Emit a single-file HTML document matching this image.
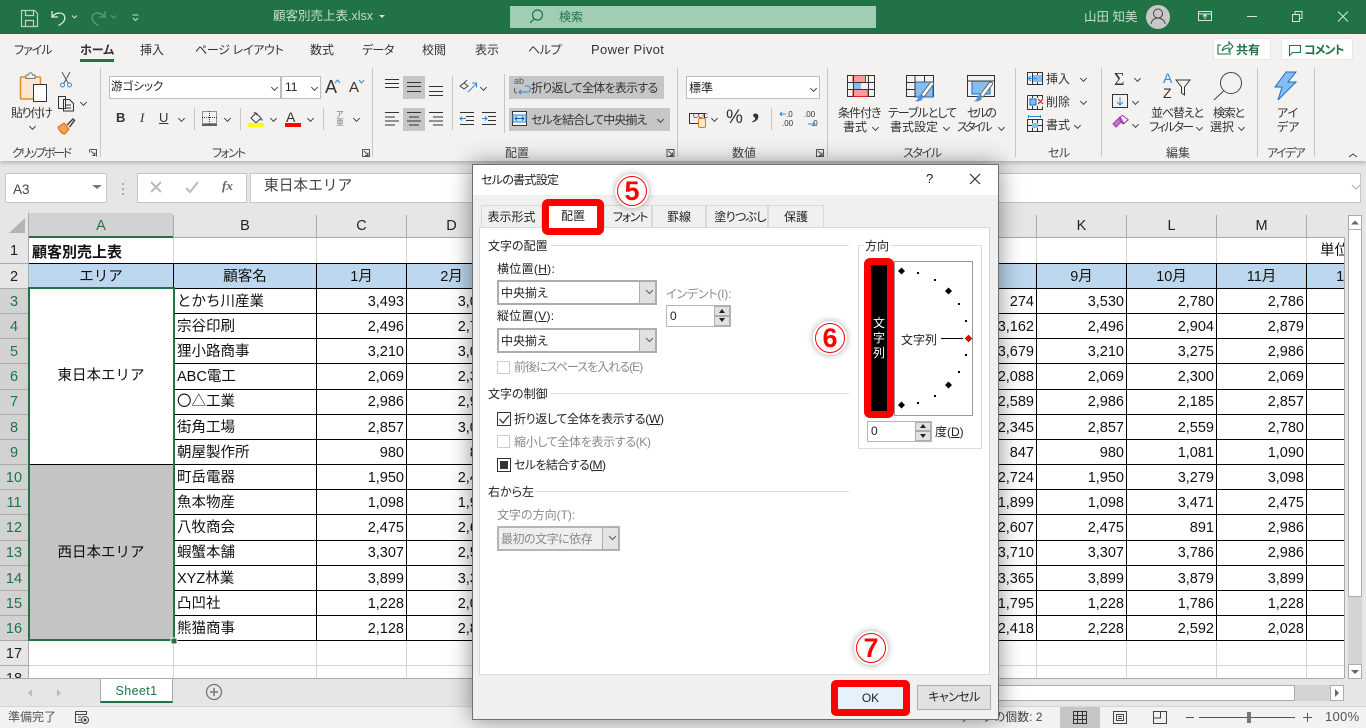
<!DOCTYPE html>
<html lang="ja"><head><meta charset="utf-8"><title>顧客別売上表.xlsx</title>
<style>
html,body{margin:0;padding:0;background:#e6e6e6}
#p{position:relative;width:1366px;height:728px;overflow:hidden;background:#e6e6e6;font:12px/16px "Liberation Sans","Noto Sans CJK JP",sans-serif;color:#333;font-feature-settings:"palt"}
#p div,#p svg{position:absolute}
.t{white-space:nowrap}
.bx{box-sizing:border-box}
.ch{width:4px;height:4px;border-right:1px solid #444;border-bottom:1px solid #444;transform:rotate(45deg)}
#sheet{left:0;top:213px;width:1344px;height:465px;overflow:hidden;background:#fff;font-size:14.5px;color:#111;font-feature-settings:normal}
.r{left:0;width:1344px;height:25px;line-height:25px}
.r span{position:absolute;white-space:nowrap;top:1px}
.r span.n{top:0;line-height:27px}
.n{left:0;width:28px;text-align:center;background:#d2d2d2;color:#217346;height:25px}
.n0{color:#222;background:#e6e6e6}
.b{left:177px}
.c{left:316px;width:88px;text-align:right}
.d{left:406px;width:88px;text-align:right}
.j{left:946px;width:88px;text-align:right}
.k{left:1036px;width:88px;text-align:right}
.l{left:1126px;width:88px;text-align:right}
.m{left:1216px;width:88px;text-align:right}
.hc{text-align:center}
.col{top:0;height:24px;line-height:26px;text-align:center;font-size:14.5px;color:#222}
.lab{color:#222}
.gr{color:#8a8a8a}
.cb{box-sizing:border-box;background:#fff;border:2px solid #adadad}
.db{box-sizing:border-box;background:#e1e1e1;border:1px solid #adadad}
.tab{top:205px;height:22px;box-sizing:border-box;background:#f0f0f0;border:1px solid #d9d9d9;border-bottom:0;text-align:center;line-height:22px;color:#222}
.badge{width:34px;height:34px;box-sizing:border-box;background:#fff;border-radius:50%;border:0;box-shadow:0 0 7px rgba(0,0,0,.35)}
.badge i{position:absolute;left:2px;top:2px;width:30px;height:30px;box-sizing:border-box;border:1px solid #f00;border-radius:50%;font:bold 27px/28px "Liberation Sans",sans-serif;color:#f00;text-align:center}
</style></head><body><div id="p">

<!-- title bar -->
<div style="left:0;top:0;width:1366px;height:34px;background:#217346"></div>
<div style="left:510px;top:6px;width:366px;height:22px;background:#a0cdb4"></div>
<div class="t" style="left:273px;top:8px;font-size:12.5px;color:#c4ddce">顧客別売上表.xlsx</div>
<div class="t" style="left:559px;top:9px;color:#217346">検索</div>
<div class="t" style="left:1084px;top:9px;color:#c4ddce;font-size:12.5px">山田 知美</div>

<!-- ribbon -->
<div style="left:0;top:34px;width:1366px;height:127px;background:#f3f2f1;box-shadow:0 2px 4px rgba(0,0,0,.22)"></div>
<div class="t" style="left:14px;top:42px;letter-spacing:-1px">ファイル</div>
<div class="t" style="left:80px;top:42px;font-weight:bold">ホーム</div>
<div style="left:80px;top:59px;width:34px;height:3px;background:#217346"></div>
<div class="t" style="left:140px;top:42px">挿入</div>
<div class="t" style="left:195px;top:42px;letter-spacing:-.3px">ページ レイアウト</div>
<div class="t" style="left:310px;top:42px">数式</div>
<div class="t" style="left:362px;top:42px;letter-spacing:-.6px">データ</div>
<div class="t" style="left:422px;top:42px">校閲</div>
<div class="t" style="left:475px;top:42px">表示</div>
<div class="t" style="left:528px;top:42px;letter-spacing:-.4px">ヘルプ</div>
<div class="t" style="left:591px;top:42px;font-size:13px;letter-spacing:.35px">Power Pivot</div>

<div class="bx" style="left:1213px;top:38px;width:58px;height:22px;background:#fff;border:1px solid #e6e6e6;border-radius:2px"></div>
<div class="t" style="left:1236px;top:42px;font-weight:bold;color:#217346">共有</div>
<div class="bx" style="left:1281px;top:38px;width:72px;height:22px;background:#fff;border:1px solid #e6e6e6;border-radius:2px"></div>
<div class="t" style="left:1304px;top:42px;font-weight:bold;color:#217346;letter-spacing:-1px">コメント</div>

<!-- ribbon boxes -->
<div class="bx" style="left:109px;top:76px;width:172px;height:23px;background:#fff;border:1px solid #bdbdbd"></div>
<div class="t" style="left:111px;top:79px;font-size:11.5px;color:#222">游ゴシック</div>
<div class="bx" style="left:281px;top:76px;width:40px;height:23px;background:#fff;border:1px solid #bdbdbd"></div>
<div class="t" style="left:285px;top:79px;color:#222">11</div>
<div style="left:403px;top:76px;width:22px;height:23px;background:#c6c6c6"></div>
<div style="left:403px;top:108px;width:22px;height:23px;background:#c6c6c6"></div>
<div style="left:509px;top:76px;width:155px;height:23px;background:#c6c6c6"></div>
<div style="left:509px;top:108px;width:161px;height:23px;background:#c6c6c6"></div>
<div class="t" style="left:531px;top:80px;letter-spacing:-.75px">折り返して全体を表示する</div>
<div class="t" style="left:531px;top:112px;letter-spacing:-.9px">セルを結合して中央揃え</div>
<div class="t" style="left:514px;top:76px;font-size:9px;line-height:10px;color:#555">ab</div>
<div class="bx" style="left:686px;top:76px;width:134px;height:23px;background:#fff;border:1px solid #bdbdbd"></div>
<div class="t" style="left:689px;top:80px;color:#222">標準</div>

<div class="t" style="left:11px;top:105px;letter-spacing:-1.4px">貼り付け</div>
<div class="t" style="left:838px;top:105px;letter-spacing:-1px">条件付き</div>
<div class="t" style="left:843px;top:119px">書式</div>
<div class="t" style="left:888px;top:105px;letter-spacing:-1px">テーブルとして</div>
<div class="t" style="left:890px;top:119px">書式設定</div>
<div class="t" style="left:967px;top:105px;letter-spacing:-2.2px">セルの</div>
<div class="t" style="left:957px;top:119px;letter-spacing:-2.6px">スタイル</div>
<div class="t" style="left:1046px;top:71px">挿入</div>
<div class="t" style="left:1046px;top:94px">削除</div>
<div class="t" style="left:1046px;top:117px">書式</div>
<div class="t" style="left:1151px;top:105px;letter-spacing:-1.2px">並べ替えと</div>
<div class="t" style="left:1149px;top:119px;letter-spacing:-1.9px">フィルター</div>
<div class="t" style="left:1213px;top:105px;letter-spacing:-1.3px">検索と</div>
<div class="t" style="left:1210px;top:119px">選択</div>
<div class="t" style="left:1277px;top:105px">アイ</div>
<div class="t" style="left:1277px;top:119px">デア</div>
<div class="t" style="left:12px;top:145px;color:#444;letter-spacing:-2.3px">クリップボード</div>
<div class="t" style="left:212px;top:145px;color:#444;letter-spacing:-1.7px">フォント</div>
<div class="t" style="left:505px;top:145px;color:#444">配置</div>
<div class="t" style="left:732px;top:145px;color:#444">数値</div>
<div class="t" style="left:903px;top:145px;color:#444;letter-spacing:-1.4px">スタイル</div>
<div class="t" style="left:1048px;top:145px;color:#444;letter-spacing:-.5px">セル</div>
<div class="t" style="left:1166px;top:145px;color:#444">編集</div>
<div class="t" style="left:1267px;top:145px;color:#444;letter-spacing:-1.6px">アイデア</div>
<div class="t" style="left:116px;top:110px;font:bold 13px/16px 'Liberation Sans',sans-serif">B</div>
<div class="t" style="left:140px;top:110px;font:italic 13px/16px 'Liberation Serif',serif">I</div>
<div class="t" style="left:159px;top:110px;font:13px/16px 'Liberation Sans',sans-serif;text-decoration:underline">U</div>
<div class="t" style="left:325px;top:78px;font:18px/18px 'Liberation Sans',sans-serif">A</div>
<div class="t" style="left:349px;top:80px;font:15px/16px 'Liberation Sans',sans-serif">A</div>
<div class="t" style="left:286px;top:109px;font:14px/16px 'Liberation Sans',sans-serif">A</div>
<div class="t" style="left:336px;top:111px;font-size:8px;line-height:8px;color:#777">ア</div>
<div class="t" style="left:336px;top:119px;font-size:8px;line-height:8px;color:#777">亜</div>
<div class="t" style="left:726px;top:108px;font:19px/20px 'Liberation Sans',sans-serif;color:#333">%</div>
<div class="t" style="left:752px;top:94px;font:bold 30px/30px 'Liberation Serif',serif;color:#333">,</div>
<div class="t" style="left:786px;top:111px;font:8px/8px 'Liberation Sans',sans-serif">.0</div>
<div class="t" style="left:782px;top:120px;font:8px/8px 'Liberation Sans',sans-serif">.00</div>
<div class="t" style="left:804px;top:111px;font:8px/8px 'Liberation Sans',sans-serif">.00</div>
<div class="t" style="left:811px;top:120px;font:8px/8px 'Liberation Sans',sans-serif">.0</div>
<div class="t" style="left:1163px;top:71px;font:14px/15px 'Liberation Sans',sans-serif;color:#2b88d8">A</div>
<div class="t" style="left:1163px;top:86px;font:14px/15px 'Liberation Sans',sans-serif;color:#333">Z</div>
<div class="t" style="left:1114px;top:70px;font:18px/18px 'Liberation Serif',serif;color:#333">Σ</div>
<div class="t" style="left:693px;top:113px;font:7px/8px 'Liberation Sans',sans-serif">CCC</div>

<!-- formula bar -->
<div class="bx" style="left:5px;top:173px;width:102px;height:30px;background:#fff;border:1px solid #c6c6c6"></div>
<div class="t" style="left:13px;top:182px;font-size:13.5px;color:#444">A3</div>
<div class="bx" style="left:137px;top:173px;width:110px;height:30px;background:#fff;border:1px solid #c6c6c6"></div>
<div class="t" style="left:222px;top:178px;font:italic bold 13px/16px 'Liberation Serif',serif;color:#666">fx</div>
<div class="bx" style="left:250px;top:173px;width:1111px;height:30px;background:#fff;border:1px solid #c6c6c6"></div>
<div class="t" style="left:264px;top:178px;font-size:14.7px;color:#444;font-feature-settings:normal">東日本エリア</div>

<!-- sheet -->
<div id="sheet">
 <div style="left:0;top:0;width:1344px;height:25px;background:#e6e6e6"></div>
 <div style="left:0;top:25px;width:28px;height:440px;background:#e6e6e6"></div>
 <div style="left:29px;top:0;width:144px;height:24px;background:#d2d2d2"></div>
 <div class="col" style="left:29px;width:144px;color:#217346">A</div>
 <div class="col" style="left:174px;width:142px">B</div>
 <div class="col" style="left:317px;width:89px">C</div>
 <div class="col" style="left:407px;width:89px">D</div>
 <div class="col" style="left:1037px;width:89px">K</div>
 <div class="col" style="left:1127px;width:89px">L</div>
 <div class="col" style="left:1217px;width:89px">M</div>
 <div style="left:29px;top:51px;width:1315px;height:24px;background:#bdd7ee"></div>
 <div style="left:29px;top:252px;width:144px;height:175px;background:#c4c4c4"></div>

 <div class="r" style="top:25px;font-weight:bold"><span class="n n0" style="font-weight:normal">1</span><span style="left:32px;top:2px;font-size:15px">顧客別売上表</span><span style="left:1320px;font-weight:normal">単位</span></div>
 <div class="r" style="top:51px"><span class="n n0" style="height:24px">2</span>
  <span class="hc" style="left:29px;width:144px">エリア</span><span class="hc" style="left:174px;width:142px">顧客名</span><span class="hc" style="left:317px;width:89px">1月</span><span class="hc" style="left:407px;width:89px">2月</span><span class="hc" style="left:1037px;width:89px">9月</span><span class="hc" style="left:1127px;width:89px">10月</span><span class="hc" style="left:1217px;width:89px">11月</span><span class="hc" style="left:1307px;width:89px">12月</span></div>
 <div class="r" style="top:76px"><span class="n">3</span><span class="b">とかち川産業</span><span class="c">3,493</span><span class="d">3,012</span><span class="j">274</span><span class="k">3,530</span><span class="l">2,780</span><span class="m">2,786</span></div>
 <div class="r" style="top:101px"><span class="n">4</span><span class="b">宗谷印刷</span><span class="c">2,496</span><span class="d">2,712</span><span class="j">3,162</span><span class="k">2,496</span><span class="l">2,904</span><span class="m">2,879</span></div>
 <div class="r" style="top:126px"><span class="n">5</span><span class="b">狸小路商事</span><span class="c">3,210</span><span class="d">3,012</span><span class="j">3,679</span><span class="k">3,210</span><span class="l">3,275</span><span class="m">2,986</span></div>
 <div class="r" style="top:151px"><span class="n">6</span><span class="b">ABC電工</span><span class="c">2,069</span><span class="d">2,312</span><span class="j">2,088</span><span class="k">2,069</span><span class="l">2,300</span><span class="m">2,069</span></div>
 <div class="r" style="top:176px"><span class="n">7</span><span class="b">〇△工業</span><span class="c">2,986</span><span class="d">2,912</span><span class="j">2,589</span><span class="k">2,986</span><span class="l">2,185</span><span class="m">2,857</span></div>
 <div class="r" style="top:202px"><span class="n">8</span><span class="b">街角工場</span><span class="c">2,857</span><span class="d">3,012</span><span class="j">2,345</span><span class="k">2,857</span><span class="l">2,559</span><span class="m">2,780</span></div>
 <div class="r" style="top:227px"><span class="n">9</span><span class="b">朝屋製作所</span><span class="c">980</span><span class="d">812</span><span class="j">847</span><span class="k">980</span><span class="l">1,081</span><span class="m">1,090</span></div>
 <div class="r" style="top:252px"><span class="n">10</span><span class="b">町岳電器</span><span class="c">1,950</span><span class="d">2,412</span><span class="j">2,724</span><span class="k">1,950</span><span class="l">3,279</span><span class="m">3,098</span></div>
 <div class="r" style="top:277px"><span class="n">11</span><span class="b">魚本物産</span><span class="c">1,098</span><span class="d">1,912</span><span class="j">1,899</span><span class="k">1,098</span><span class="l">3,471</span><span class="m">2,475</span></div>
 <div class="r" style="top:302px"><span class="n">12</span><span class="b">八牧商会</span><span class="c">2,475</span><span class="d">2,612</span><span class="j">2,607</span><span class="k">2,475</span><span class="l">891</span><span class="m">2,986</span></div>
 <div class="r" style="top:327px"><span class="n">13</span><span class="b">蝦蟹本舗</span><span class="c">3,307</span><span class="d">2,512</span><span class="j">3,710</span><span class="k">3,307</span><span class="l">3,786</span><span class="m">2,986</span></div>
 <div class="r" style="top:353px"><span class="n">14</span><span class="b">XYZ林業</span><span class="c">3,899</span><span class="d">3,312</span><span class="j">3,365</span><span class="k">3,899</span><span class="l">3,879</span><span class="m">3,899</span></div>
 <div class="r" style="top:378px"><span class="n">15</span><span class="b">凸凹社</span><span class="c">1,228</span><span class="d">2,012</span><span class="j">1,795</span><span class="k">1,228</span><span class="l">1,786</span><span class="m">1,228</span></div>
 <div class="r" style="top:403px"><span class="n">16</span><span class="b">熊猫商事</span><span class="c">2,128</span><span class="d">2,812</span><span class="j">2,418</span><span class="k">2,228</span><span class="l">2,592</span><span class="m">2,028</span></div>
 <div class="r" style="top:428px"><span class="n n0">17</span></div>
 <div class="r" style="top:453px"><span class="n n0">18</span></div>
 <div class="t" style="left:29px;top:151px;width:144px;text-align:center;line-height:25px">東日本エリア</div>
 <div class="t" style="left:29px;top:328px;width:144px;text-align:center;line-height:25px">西日本エリア</div>
</div>

<svg width="1366" height="728" viewBox="0 0 1366 728" style="left:0;top:0" shape-rendering="crispEdges" fill="none">
 <!-- grid -->
 <path stroke="#d4d4d4" d="M173.5 238V263M316.5 238V263M406.5 238V263M496.5 238V263M586.5 238V263M946.5 238V263M1036.5 238V263M1126.5 238V263M1216.5 238V263M1306.5 238V263M173.5 641V678M316.5 641V678M406.5 641V678M1036.5 641V678M1126.5 641V678M1216.5 641V678M1306.5 641V678M29 665.5H1344"/>
 <path stroke="#aaa" d="M28.5 213V678M29 237.5H1344M173.5 215V237M316.5 215V237M406.5 215V237M496.5 215V237M1036.5 215V237M1126.5 215V237M1216.5 215V237M1306.5 215V237M0 263.5H28M0 288.5H28M0 313.5H28M0 338.5H28M0 363.5H28M0 389.5H28M0 414.5H28M0 439.5H28M0 464.5H28M0 489.5H28M0 514.5H28M0 540.5H28M0 565.5H28M0 590.5H28M0 615.5H28M0 640.5H28M0 665.5H28M1344.5 237V678"/>
 <path stroke="#000" d="M29 263.5H1344M29 288.5H1344M174 313.5H1344M174 338.5H1344M174 363.5H1344M174 389.5H1344M174 414.5H1344M174 439.5H1344M29 464.5H1344M174 489.5H1344M174 514.5H1344M174 540.5H1344M174 565.5H1344M174 590.5H1344M174 615.5H1344M174 640.5H1344M173.5 263V640M316.5 263V640M406.5 263V640M496.5 263V640M946.5 263V640M1036.5 263V640M1126.5 263V640M1216.5 263V640M1306.5 263V640"/>
 <path stroke="#217346" stroke-width="2" d="M29 288H174V640H29Z"/>
 <path stroke="#217346" stroke-width="2" d="M29 237H173"/>
 <rect x="171" y="638" width="6" height="6" fill="#217346" stroke="#fff"/>
 <path fill="#b4b4b4" d="M25 218V233H9Z" shape-rendering="auto"/>

 <!-- separators -->
 <path stroke="#c6c6c6" d="M100.5 68V157M372.5 68V157M677.5 68V157M827.5 68V157M1015.5 68V157M1101.5 68V157M1257.5 68V157M1314.5 68V157M504.5 74V133M452.5 76V130M194.5 108V130M240.5 108V130M323.5 108V130M771.5 108V130"/>
 <path stroke="#e0e0e0" d="M125.5 176V200"/>
</svg>

<svg width="1366" height="728" viewBox="0 0 1366 728" style="left:0;top:0" fill="none">
 <!-- title icons -->
 <path stroke="#b7d4c4" stroke-width="1.2" d="M21.5 10.5h13l3 3v13h-16zM25.5 10.5v5h8v-5M25.5 26.5v-6h8v6"/>
 <path stroke="#dfeae4" stroke-width="1.3" d="M52 11v6h6M52.5 16.5c3-4 10-5 12-.5 1.500 4-2 7.500-6 9.500"/>
 <path stroke="#5f9c7c" stroke-width="1.300" d="M105 11v6h-6M104.500 16.500c-3-4-10-5-12-.5-1.500 4 2 7.500 6 9.500"/>
 <path stroke="#cfe2d7" d="M72 15.500l2.500 2.500 2.500-2.500"/>
 <path stroke="#5f9c7c" d="M111 15.500l2.500 2.500 2.500-2.500"/>
 <path stroke="#cfe2d7" d="M132.500 15h6M133 18l2.500 2.500 2.500-2.500"/>
 <path fill="#cfe2d7" d="M379 15h6l-3 3z"/>
 <circle cx="537.500" cy="15" r="5" stroke="#217346" stroke-width="1.200"/><path stroke="#217346" stroke-width="1.200" d="M534 19l-4 4"/>
 <circle cx="1158" cy="17" r="12" fill="#c8c8c8"/><circle cx="1158" cy="13.500" r="4.500" stroke="#444"/><path stroke="#444" d="M1151 24c1-8 13-8 14 0"/>
 <path stroke="#d6e6dd" d="M1198.500 11.500h13v9h-13zM1198.500 14h13M1205 19v-4M1203 16.500l2-2 2 2"/>
 <path stroke="#d6e6dd" d="M1247 16.500h10"/>
 <path stroke="#d6e6dd" d="M1292.500 14.500h7v7h-7zM1295 14v-2.500h7v7h-2.500"/>
 <path stroke="#d6e6dd" d="M1338 11.500l10 10M1348 11.500l-10 10"/>

 <!-- share / comment -->
 <path stroke="#217346" stroke-width="1.100" d="M1221 45h-3v9h12v-3M1222 51c1-4 3-6 7-6v-3l4 4.500-4 4.500v-3c-3 0-5 1-7 3"/>
 <path stroke="#217346" stroke-width="1.100" d="M1289.500 45.500h11v7h-8l-3 3z"/>

 <!-- clipboard -->
 <rect x="20.500" y="77" width="20" height="22" rx="1" fill="#fbe7d0" stroke="#e8862a" stroke-width="1.500"/>
 <path stroke="#777" fill="#f3f2f1" d="M26 77v-2h2.500c0-3 4-3 4 0h2.500v3.500h-9z"/>
 <rect x="33.500" y="84.500" width="13" height="17" fill="#fff" stroke="#333"/>
 <path stroke="#555" d="M62 72l6 11M70 72l-6 11"/><circle cx="62.500" cy="85" r="2" stroke="#2b88d8"/><circle cx="69.500" cy="85" r="2" stroke="#2b88d8"/>
 <path stroke="#333" fill="#f3f2f1" d="M58.500 96.500h7v12h-7zM63.500 99.500h6l4 4v7.500h-10z"/><path stroke="#333" d="M66 105h5M66 108h5"/>
 <path fill="#f2a250" stroke="#d86a10" d="M58 127l6-4 5 6-4 5c-3 0-6-3-7-7z"/><path stroke="#444" stroke-width="1.500" d="M67 125l6-6 1.500 1.500-5 6.500"/>

 <!-- font -->
 <path stroke="#2b88d8" d="M335 83l2.500-3 2.500 3"/><path stroke="#2b88d8" d="M359 80l2.500 3 2.500-3"/>
 <path stroke="#333" stroke-dasharray="1 1" d="M202.500 111.500h14v12h-14zM209.500 111v13M202 117.500h15"/><path stroke="#111" stroke-width="1.300" d="M202 125h15"/>
 <path stroke="#444" d="M251 118l5-5 5 5-5 5zM254 112l3 3"/><path fill="#1e6fc0" d="M260 117c1 1 3 2 2.500 3.500h-2z"/>
 <rect x="248" y="123" width="16" height="4" fill="#ff0"/>
 <rect x="285" y="123" width="16" height="4" fill="#f00"/>

 <!-- align -->
 <g stroke="#333"><path d="M385 79.500h14M385 83.500h14M385 87.500h14"/><path d="M407 82.500h14M407 86.500h14M407 91.500h14"/><path d="M429 86.500h14M429 91.500h14M429 95.500h14"/>
 <path d="M385 112.500h14M385 117h10M385 121h14M385 125h10"/><path d="M407 112.500h14M409 117h10M407 121h14M409 125h10"/><path d="M429 112.500h14M433 117h10M429 121h14M433 125h10"/>
 <path d="M460 112.500h14M466 116.500h8M466 120.500h8M460 124.500h14"/><path d="M482 112.500h14M488 116.500h8M488 120.500h8M482 124.500h14"/></g>
 <path stroke="#2b88d8" d="M460 118.500h6M462 116.500l-2 2 2 2M482 118.500h5M485 116.500l2 2-2 2"/>
 <path stroke="#444" d="M460 86l4-3 4 3-4 3zM467 80l-4 4"/><path stroke="#2b88d8" d="M468 92l8-8M472 83h4.500v4.500"/>
 <path stroke="#2b88d8" d="M519 92h9c3 0 3-6 0-6h-3M521 90l-2 2 2 2"/>
 <path stroke="#555" d="M515 88c-1 2-1 5 2 5"/>
 <rect x="512.500" y="111.500" width="14" height="14" fill="#fff" stroke="#333"/><path stroke="#2b88d8" fill="#cde3f6" d="M513 115h13v7h-13z"/><path stroke="#1565b0" d="M515 118.500h9M517 116.500l-2 2 2 2M522 116.500l2 2-2 2"/>

 <!-- number -->
 <rect x="689.500" y="113.500" width="15" height="10" stroke="#333"/>
 <rect x="698.500" y="118.500" width="7" height="9" rx="1.500" fill="#fbe7d0" stroke="#e07b1a"/>
 <path stroke="#2b88d8" d="M780 114h6M782 112l-2 2 2 2M808 124h7M813 122l2 2-2 2"/>

 <!-- styles -->
 <g stroke="#333" stroke-width="1"><rect x="847.500" y="75.500" width="27" height="21"/></g>
 <rect x="853" y="75.500" width="12.500" height="7" fill="#ff9a9a" stroke="#d22"/><rect x="853" y="82.500" width="8" height="7" fill="#86bdf0"/><rect x="853" y="89.500" width="15" height="7" fill="#ff9a9a" stroke="#d22"/>
 <path stroke="#333" d="M847 82.500h28M847 89.500h28M853.500 75v22M868.500 75v22"/>
 <rect x="906.500" y="75.500" width="27" height="21" stroke="#333"/><rect x="915" y="82" width="18" height="15" fill="#86bdf0" stroke="#1570c0"/><path stroke="#333" d="M906 82.500h9M906 89.500h9M915 75v22M924.500 75v7"/>
 <path fill="#fff" stroke="#666" d="M921 95l9-12c2-2 5 0 3 2l-9 12z"/><path fill="#4d94d0" d="M914 101c3 0 4-2 4.500-5 1.500-2 5 1 4 3-1 2-5 3-8.500 2z"/>
 <rect x="967.500" y="75.500" width="27" height="21" stroke="#333"/><rect x="972" y="81" width="18" height="13" fill="#86bdf0" stroke="#1570c0"/><path stroke="#333" d="M967 81h28"/>
 <path fill="#fff" stroke="#666" d="M980 95l9-12c2-2 5 0 3 2l-9 12z"/><path fill="#4d94d0" d="M973 101c3 0 4-2 4.500-5 1.500-2 5 1 4 3-1 2-5 3-8.500 2z"/>

 <!-- cells -->
 <path stroke="#333" d="M1027.500 72.500h15v12h-15zM1027.500 78.500h15M1032.500 72v13M1037.500 72v13"/><rect x="1033" y="75" width="9" height="7" fill="#86bdf0"/><path stroke="#2b88d8" d="M1028 78.500h9M1031 76l-3 2.500 3 2.500"/>
 <path stroke="#333" d="M1027.500 95.500h15v3M1027.500 95.500v14h15v-3M1032.500 95v3M1032.500 106v4M1037.500 95v3M1037.500 106v4"/><rect x="1030" y="99" width="6" height="6" fill="#86bdf0" stroke="#1570c0"/><path stroke="#e81123" stroke-width="1.200" d="M1038 99l5 5M1043 99l-5 5"/>
 <path stroke="#2b88d8" d="M1029 116.500h11M1028.500 115v3M1040.500 115v3"/><path stroke="#333" d="M1027.500 119.500h15v12h-15zM1027.500 125.500h15M1032.500 119v13M1037.500 119v13"/><rect x="1032" y="123" width="6" height="5" fill="#86bdf0"/>

 <!-- edit -->
 <rect x="1112.500" y="94.500" width="15" height="13" stroke="#333"/><path stroke="#2b88d8" d="M1120 97v8M1117 102l3 3 3-3"/>
 <path fill="#c37bd0" stroke="#a034b0" d="M1113 124l7-7 3 3-7 7zM1120 117l3-1 5 4-5 4-3-3z"/><path fill="#fff" stroke="#a034b0" d="M1120 117l2.500-1.500 5.500 4-4 4z"/>
 <path stroke="#333" d="M1176 80h14l-5.500 7v8l-3-2v-6z"/>
 <circle cx="1231" cy="83" r="10.500" stroke="#444"/><path stroke="#444" d="M1223.500 91l-9.500 9"/>
 <path fill="#86bdf0" stroke="#1e6fc0" d="M1286 72l-11 15h7l-4 13 18-18h-8l8-10z"/>

 <!-- formula icons -->
 <path stroke="#bbb" stroke-width="2" d="M151 182l10 10M161 182l-10 10M186 188l4 4 8-10"/>
 <path fill="#777" d="M92 185h10l-5 4z"/>
 <path stroke="#aaa" d="M1352 185l4 4 4-4"/>
 <path stroke="#444" d="M1349 157l4-3 4 3"/>
 <path d="M122 183h2v2h-2zM122 188h2v2h-2zM122 193h2v2h-2z" fill="#aaa"/>

 <!-- launchers -->
 <g stroke="#555"><path d="M89.500 149.500h7v7M89.500 149.500v3M89.500 149.500h3M91 151l4 4M95 152.500v3h-3"/><path d="M362.500 149.500h7v7h-7zM364 151l4 4M368 152.500v3h-3"/><path d="M667 149.500h7v7h-7zM668.500 151l4 4M672.500 152.500v3h-3"/><path d="M816.500 149.500h7v7h-7zM818 151l4 4M822 152.500v3h-3"/></g>
</svg>

<!-- chevrons -->
<div class="ch" style="left:30px;top:124px"></div><div class="ch" style="left:81px;top:100px"></div>
<div class="ch" style="left:272px;top:85px"></div><div class="ch" style="left:312px;top:85px"></div>
<div class="ch" style="left:179px;top:116px"></div><div class="ch" style="left:225px;top:116px"></div><div class="ch" style="left:271px;top:116px"></div><div class="ch" style="left:308px;top:116px"></div><div class="ch" style="left:354px;top:116px"></div>
<div class="ch" style="left:481px;top:85px"></div><div class="ch" style="left:658px;top:117px"></div><div class="ch" style="left:811px;top:86px"></div><div class="ch" style="left:712px;top:116px"></div>
<div class="ch" style="left:873px;top:125px"></div><div class="ch" style="left:944px;top:125px"></div><div class="ch" style="left:999px;top:125px"></div>
<div class="ch" style="left:1081px;top:76px"></div><div class="ch" style="left:1081px;top:99px"></div><div class="ch" style="left:1075px;top:123px"></div>
<div class="ch" style="left:1135px;top:76px"></div><div class="ch" style="left:1133px;top:99px"></div><div class="ch" style="left:1133px;top:122px"></div>
<div class="ch" style="left:1197px;top:125px"></div><div class="ch" style="left:1239px;top:125px"></div>

<!-- scrollbars -->
<div class="bx" style="left:1348px;top:215px;width:14px;height:15px;background:#fff;border:1px solid #ababab"></div>
<div class="bx" style="left:1348px;top:230px;width:14px;height:367px;background:#fff;border:1px solid #ababab;border-top:0"></div>
<div style="left:1348px;top:597px;width:14px;height:67px;background:#d4d4d4"></div>
<div class="bx" style="left:1348px;top:664px;width:14px;height:15px;background:#fff;border:1px solid #ababab"></div>
<div style="left:1000px;top:678px;width:344px;height:1px;background:#aaa"></div>
<div class="bx" style="left:990px;top:685px;width:305px;height:16px;background:#fff;border:1px solid #ababab"></div>
<div style="left:1295px;top:685px;width:35px;height:16px;background:#d4d4d4"></div>
<div class="bx" style="left:1330px;top:685px;width:14px;height:16px;background:#fff;border:1px solid #ababab"></div>

<!-- sheet tab bar -->
<div style="left:0;top:678px;width:990px;height:1px;background:#aaa"></div>
<div class="bx" style="left:100px;top:678px;width:73px;height:25px;background:#fff;border:1px solid #aaa;border-top:1px solid #aaa;border-bottom:2px solid #217346;text-align:center;line-height:24px;color:#217346;font-size:12.5px;letter-spacing:.4px">Sheet1</div>

<!-- status bar -->
<div style="left:0;top:706px;width:1366px;height:22px;background:#f3f2f1;border-top:1px solid #d6d6d6"></div>
<div class="t" style="left:8px;top:709px;color:#555">準備完了</div>
<div class="t" style="left:960px;top:709px;width:81px;text-align:right;color:#444">データの個数: 2</div>
<div style="left:1060px;top:707px;width:40px;height:21px;background:#c8c6c4"></div>
<div class="t" style="left:1325px;top:709px;color:#555;font-size:13px;letter-spacing:.3px">100%</div>

<svg width="1366" height="728" viewBox="0 0 1366 728" style="left:0;top:0" fill="none">
 <path fill="#666" d="M1351 224.500l4-4 4 4zM1351 670l4 4 4-4zM1335 689v8l4-4z" />
 <path fill="#bbb" d="M32 689v8l-4-4zM57 689v8l4-4z"/>
 <circle cx="214" cy="692" r="7.500" stroke="#777" stroke-width="1.300"/><path stroke="#777" stroke-width="1.500" d="M210 692h8M214 688v8"/>
 <path stroke="#444" d="M75.500 711.500h11v3M75.500 711.500v11h6M75.500 714.500h11M78 717h3M78 720h3"/><circle cx="85" cy="720" r="3.500" stroke="#444"/><circle cx="85" cy="720" r="1.500" fill="#444"/>
 <path stroke="#333" d="M1073.500 711.500h13v12h-13zM1073.500 715.500h13M1073.500 719.500h13M1077.500 711v13M1082.500 711v13"/>
 <path stroke="#444" d="M1113.500 711.500h13v12h-13zM1116.500 714.500h7v6h-7zM1118 716.500h4M1118 718.500h4"/>
 <path stroke="#444" d="M1153.500 711.500h13v12h-13zM1160.500 711v7h-7"/>
 <path stroke="#555" d="M1186 717.500h8M1303 717.500h9M1307.500 713v9M1199 717.500h96"/>
 <rect x="1247" y="712" width="4" height="11" fill="#777"/>
</svg>

<!-- DIALOG -->
<div class="bx" style="left:472px;top:164px;width:527px;height:556px;background:#f0f0f0;border:1px solid #707070;box-shadow:0 0 22px rgba(0,0,0,.45);z-index:5">
</div>
<div id="dlg" style="left:0;top:0;width:1366px;height:728px;z-index:6">
 <div style="left:473px;top:165px;width:525px;height:30px;background:#fff"></div>
 <div class="t lab" style="left:481px;top:172px;letter-spacing:-.7px">セルの書式設定</div>
 <div class="t lab" style="left:926px;top:171px;font-size:13px">?</div>
 <div class="bx" style="left:479px;top:227px;width:511px;height:448px;background:#fff;border:1px solid #d9d9d9"></div>
 <div class="tab" style="left:481px;width:61px">表示形式</div>
 <div class="tab" style="left:604px;width:48px;letter-spacing:-1.3px;text-indent:4px">フォント</div>
 <div class="tab" style="left:652px;width:54px">罫線</div>
 <div class="tab" style="left:706px;width:62px;letter-spacing:-.7px;text-indent:6px">塗りつぶし</div>
 <div class="tab" style="left:768px;width:56px">保護</div>
 <div class="bx" style="left:542px;top:199px;width:62px;height:36px;background:#fff;border:7px solid #f00;border-radius:6px;text-align:center;line-height:20px;color:#222">配置</div>

 <div class="t lab" style="left:488px;top:238px">文字の配置</div>
 <div style="left:551px;top:245px;width:298px;height:1px;background:#dcdcdc"></div>
 <div class="t lab" style="left:497px;top:261px;letter-spacing:.3px">横位置(<u>H</u>):</div>
 <div class="cb" style="left:497px;top:280px;width:160px;height:25px"></div>
 <div class="db" style="left:639px;top:281px;width:17px;height:23px"></div>
 <div class="t lab" style="left:501px;top:285px">中央揃え</div>
 <div class="t gr" style="left:666px;top:286px;letter-spacing:-.2px">インデント(I):</div>
 <div class="bx" style="left:666px;top:305px;width:65px;height:22px;background:#fff;border:1px solid #b5b5b5"></div>
 <div class="t lab" style="left:670px;top:308px">0</div>
 <div class="db" style="left:714px;top:306px;width:16px;height:10px"></div>
 <div class="db" style="left:714px;top:316px;width:16px;height:10px"></div>
 <div class="t lab" style="left:497px;top:308px;letter-spacing:.3px">縦位置(<u>V</u>):</div>
 <div class="cb" style="left:497px;top:328px;width:160px;height:25px"></div>
 <div class="db" style="left:639px;top:329px;width:17px;height:23px"></div>
 <div class="t lab" style="left:501px;top:333px">中央揃え</div>
 <div class="bx" style="left:497px;top:361px;width:13px;height:13px;border:1px solid #ccc"></div>
 <div class="t gr" style="left:514px;top:359px;letter-spacing:-.95px">前後にスペースを入れる(E)</div>

 <div class="t lab" style="left:488px;top:386px">文字の制御</div>
 <div style="left:551px;top:393px;width:298px;height:1px;background:#dcdcdc"></div>
 <div class="bx" style="left:497px;top:412px;width:14px;height:14px;background:#fff;border:1px solid #333"></div>
 <div class="t lab" style="left:514px;top:411px;letter-spacing:-.35px">折り返して全体を表示する(<u>W</u>)</div>
 <div class="bx" style="left:497px;top:435px;width:13px;height:13px;border:1px solid #ccc"></div>
 <div class="t gr" style="left:514px;top:434px;letter-spacing:-.35px">縮小して全体を表示する(K)</div>
 <div class="bx" style="left:497px;top:458px;width:14px;height:14px;background:#fff;border:1px solid #333"></div>
 <div style="left:500px;top:461px;width:8px;height:8px;background:#333"></div>
 <div class="t lab" style="left:514px;top:457px;letter-spacing:-.6px">セルを結合する(<u>M</u>)</div>

 <div class="t lab" style="left:488px;top:484px">右から左</div>
 <div style="left:535px;top:491px;width:314px;height:1px;background:#dcdcdc"></div>
 <div class="t gr" style="left:497px;top:507px">文字の方向(T):</div>
 <div class="bx" style="left:497px;top:526px;width:123px;height:25px;background:#efefef;border:2px solid #b5b5b5"></div>
 <div class="db" style="left:602px;top:527px;width:17px;height:23px;background:#e4e4e4"></div>
 <div class="t gr" style="left:501px;top:531px;letter-spacing:-.5px">最初の文字に依存</div>

 <div class="bx" style="left:858px;top:245px;width:124px;height:204px;border:1px solid #dcdcdc"></div>
 <div class="t lab" style="left:864px;top:238px;background:#fff;padding:0 1px;width:24px">方向</div>
 <div class="bx" style="left:894px;top:261px;width:79px;height:155px;background:#fff;border:1px solid #9a9a9a"></div>
 <div class="bx" style="left:864px;top:258px;width:30px;height:160px;background:#000;border:7px solid #f00;border-radius:6px"></div>
 <div class="t" style="left:873px;top:316px;width:12px;color:#fff;line-height:15px;white-space:normal;text-align:center">文字列</div>
 <div class="t lab" style="left:901px;top:332px">文字列</div>
 <div class="bx" style="left:867px;top:421px;width:65px;height:21px;background:#fff;border:1px solid #b5b5b5"></div>
 <div class="t lab" style="left:871px;top:423px">0</div>
 <div class="db" style="left:915px;top:422px;width:16px;height:9px"></div>
 <div class="db" style="left:915px;top:431px;width:16px;height:10px"></div>
 <div class="t lab" style="left:935px;top:424px">度(<u>D</u>)</div>
 <svg width="1366" height="728" viewBox="0 0 1366 728" style="left:0;top:0" fill="none">
  <path stroke="#000" d="M941 338.500h22"/>
  <path fill="#000" d="M901.500 267.500l3.500 3.500-3.500 3.500-3.500-3.500zM948.500 287.500l3.500 3.500-3.500 3.500-3.500-3.500zM948.500 381.500l3.500 3.500-3.500 3.500-3.500-3.500zM901.500 401.500l3.500 3.500-3.500 3.500-3.500-3.500z"/>
  <path fill="#f00" stroke="#600" stroke-width=".5" d="M968.500 335l3.500 3.500-3.500 3.500-3.500-3.500z"/>
  <path fill="#000" d="M917 272h2v2h-2zM934 279h2v2h-2zM958 303h2v2h-2zM965 320h2v2h-2zM965 354h2v2h-2zM958 371h2v2h-2zM934 395h2v2h-2zM917 402h2v2h-2z"/>
  <path stroke="#666" stroke-width="1.200" d="M646 290l3.500 3.500 3.500-3.500M646 338l3.500 3.500 3.500-3.500M609 536l3.500 3.500 3.500-3.500"/>
  <path fill="#222" d="M722 309l-3 4h6zM722 322l-3-4h6zM923 424l-3 4h6zM923 438l-3-4h6z"/>
  <path stroke="#333" stroke-width="1.300" d="M499.500 419l3.500 4 6-7.500"/>
  <path stroke="#333" stroke-width="1.200" d="M970 174l10 10M980 174l-10 10"/>
 </svg>

 <div class="bx" style="left:831px;top:680px;width:79px;height:36px;background:#e5f1fb;border:7px solid #f00;border-radius:5px;text-align:center;line-height:22px;color:#222">OK</div>
 <div class="bx" style="left:917px;top:685px;width:74px;height:25px;background:#e1e1e1;border:1px solid #adadad;text-align:center;line-height:22px;color:#222;letter-spacing:-.6px">キャンセル</div>

 <div class="badge" style="left:615px;top:174px"><i>5</i></div>
 <div class="badge" style="left:813px;top:321px"><i>6</i></div>
 <div class="badge" style="left:854px;top:631px"><i>7</i></div>
</div>
</div></body></html>
